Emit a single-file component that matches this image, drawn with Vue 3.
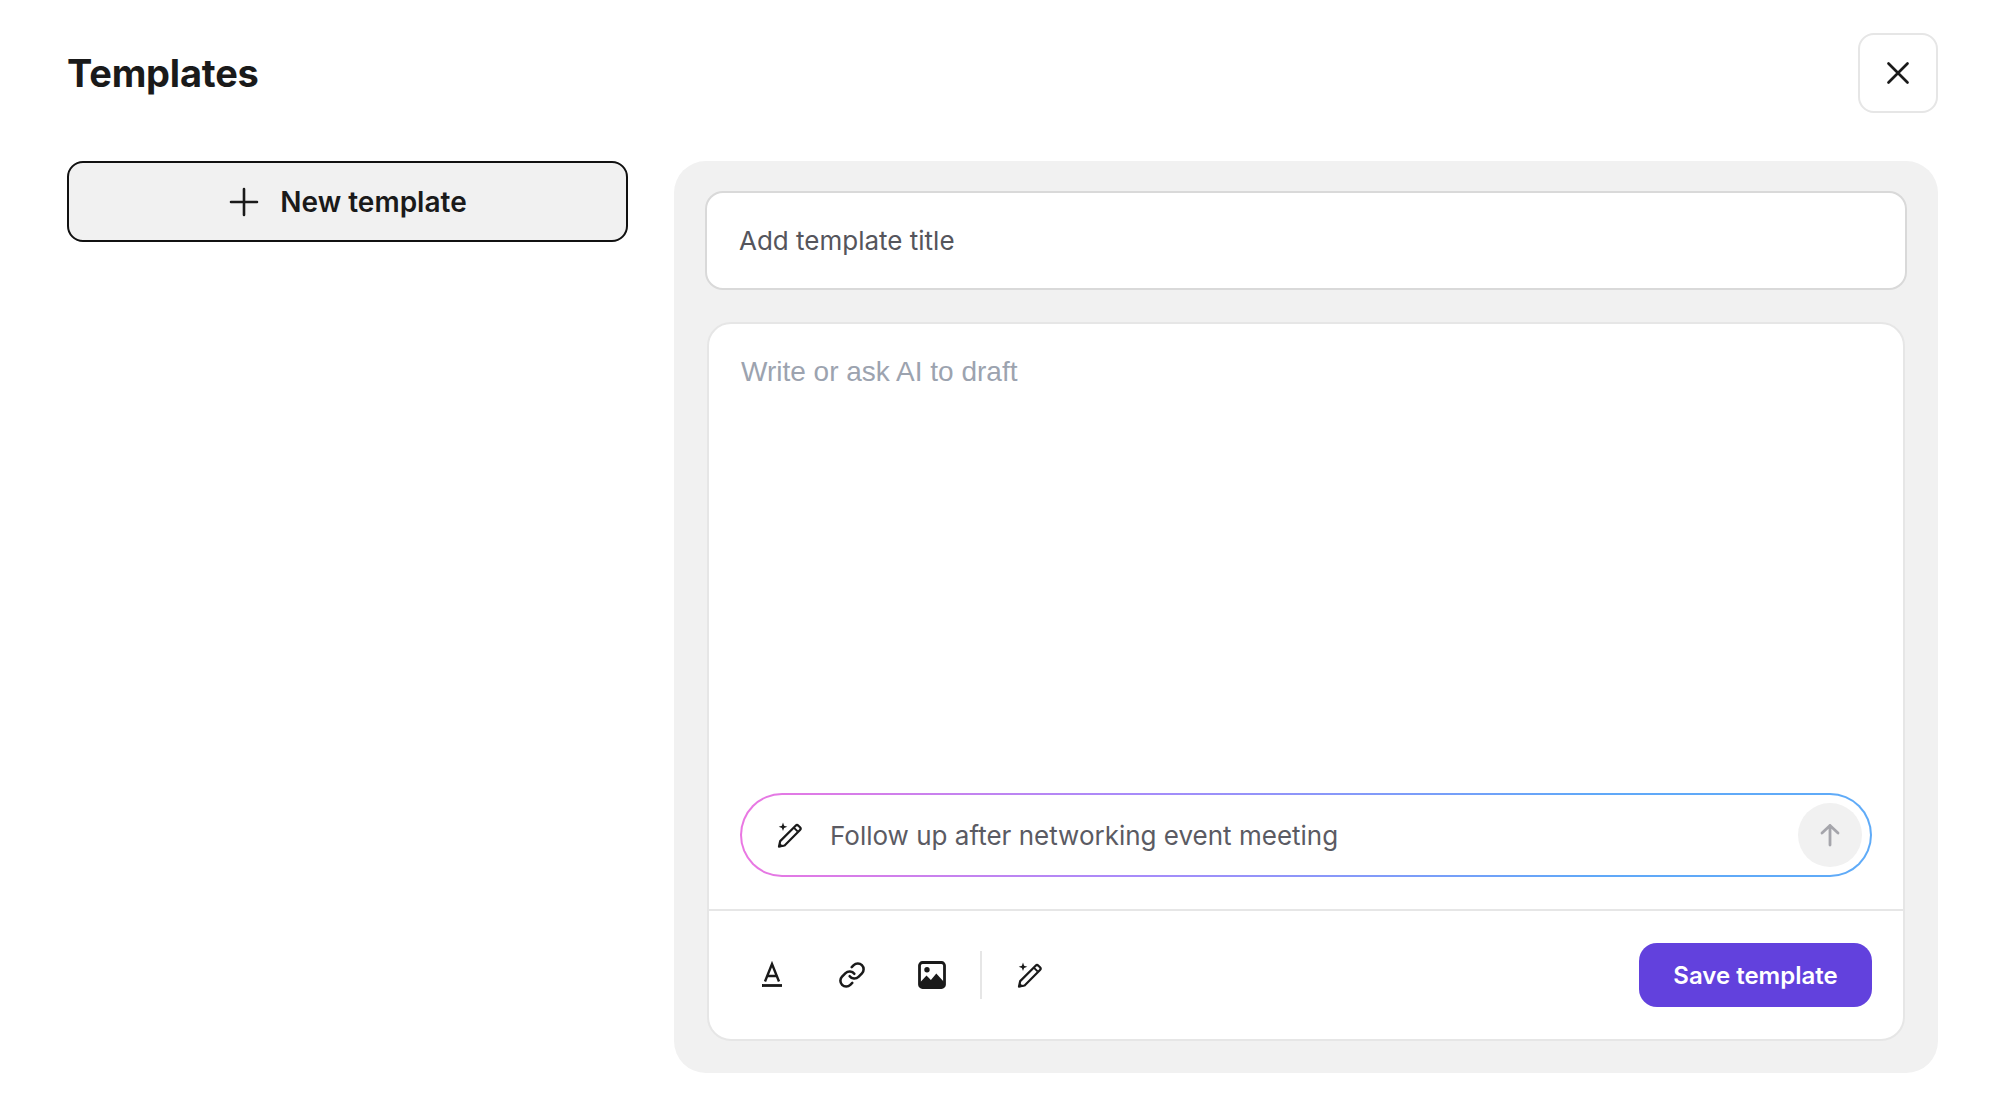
<script setup>
const wandBody = 'M3 25.5l1.2-5.4L19.6 4.7a2 2 0 0 1 2.8 0l1.6 1.6a2 2 0 0 1 0 2.8L8.6 24.5 3 25.5z'
const wandStar = 'M7 1.5l1.1 3.2 3.2 1.1-3.2 1.1L7 10.1 5.9 6.9 2.7 5.8l3.2-1.1L7 1.5z'
</script>

<template>
  <div class="page">
    <header class="top">
      <h1>Templates</h1>
      <button class="close">
        <svg width="28" height="28" viewBox="0 0 28 28" fill="none" stroke="#1a1a1a" stroke-width="2.7" stroke-linecap="round">
          <path d="M4.5 4.5l19 19M23.5 4.5l-19 19" />
        </svg>
      </button>
    </header>

    <div class="columns">
      <aside>
        <button class="new-btn">
          <svg width="32" height="32" viewBox="0 0 32 32" fill="none" stroke="#1a1a1a" stroke-width="2.6" stroke-linecap="round">
            <path d="M16 3v26M3 16h26" />
          </svg>
          <span>New template</span>
        </button>
      </aside>

      <section class="panel">
        <div class="title-input">Add template title</div>

        <div class="card">
          <div class="body">
            <div class="placeholder">Write or ask AI to draft</div>
            <div class="pill">
              <svg class="icon" width="28" height="28" viewBox="0 0 28 28">
                <path :d="wandBody" fill="none" stroke="#1a1a1a" stroke-width="2.2" stroke-linejoin="round" />
                <path d="M2.5 26.5l.9-5 4.4 4.2-5.3.8z" fill="#1a1a1a" />
                <path d="M17.8 6.6l3.8 3.8" stroke="#1a1a1a" stroke-width="2" />
                <path :d="wandStar" fill="#1a1a1a" />
              </svg>
              <span class="prompt">Follow up after networking event meeting</span>
              <button class="send">
                <svg width="24" height="24" viewBox="0 0 24 24" fill="none" stroke="#a5a5ab" stroke-width="2.8" stroke-linecap="round" stroke-linejoin="round">
                  <path d="M12 22V2.5M4 10l8-7.5 8 7.5" />
                </svg>
              </button>
            </div>
          </div>

          <footer class="toolbar">
            <button class="tool">
              <svg width="28" height="28" viewBox="0 0 28 28" fill="none" stroke="#1a1a1a" stroke-width="2.4">
                <path d="M7 20.5L14 3l7 17.5M9.2 15h9.6" />
                <path d="M4 24.5h20" stroke-width="2.8" />
              </svg>
            </button>
            <button class="tool">
              <svg width="28" height="28" viewBox="0 0 24 24" fill="none" stroke="#1a1a1a" stroke-width="2.2" stroke-linecap="round" stroke-linejoin="round">
                <path d="M10 13a5 5 0 0 0 7.54.54l3-3a5 5 0 0 0-7.07-7.07l-1.72 1.71" />
                <path d="M14 11a5 5 0 0 0-7.54-.54l-3 3a5 5 0 0 0 7.07 7.07l1.71-1.71" />
              </svg>
            </button>
            <button class="tool">
              <svg width="28" height="28" viewBox="0 0 28 28">
                <rect x="1.5" y="1.5" width="25" height="25" rx="3" fill="none" stroke="#1a1a1a" stroke-width="2.8" />
                <circle cx="9" cy="8.8" r="2.7" fill="#1a1a1a" />
                <path d="M2 26v-4.5l6.5-7 4.4 4.4 5.4-6.4 7.7 8.6V26z" fill="#1a1a1a" />
              </svg>
            </button>
            <div class="sep"></div>
            <button class="tool">
              <svg width="28" height="28" viewBox="0 0 28 28">
                <path :d="wandBody" fill="none" stroke="#1a1a1a" stroke-width="2.2" stroke-linejoin="round" />
                <path d="M2.5 26.5l.9-5 4.4 4.2-5.3.8z" fill="#1a1a1a" />
                <path d="M17.8 6.6l3.8 3.8" stroke="#1a1a1a" stroke-width="2" />
                <path :d="wandStar" fill="#1a1a1a" />
              </svg>
            </button>
            <button class="save">Save template</button>
          </footer>
        </div>
      </section>
    </div>
  </div>
</template>

<style>
html, body {
  margin: 0;
  background: #fff;
}
</style>

<style scoped>
.page {
  box-sizing: border-box;
  width: 1996px;
  height: 1102px;
  padding: 33px 58px 0 67px;
  font-family: Inter, 'Noto Sans', sans-serif;
  color: #1a1a1a;
  overflow: hidden;
}

button {
  font-family: inherit;
  cursor: pointer;
}

.top {
  display: flex;
  justify-content: space-between;
  align-items: center;
  height: 80px;
  margin-bottom: 48px;
}

h1 {
  margin: 0;
  font-size: 38px;
  font-weight: 700;
  letter-spacing: -0.2px;
}

.close {
  display: flex;
  align-items: center;
  justify-content: center;
  box-sizing: border-box;
  width: 80px;
  height: 80px;
  padding: 0;
  background: #fff;
  border: 2px solid #e6e6e6;
  border-radius: 16px;
}

.columns {
  display: flex;
  gap: 46px;
}

aside {
  width: 561px;
  flex: none;
}

.new-btn {
  display: flex;
  align-items: center;
  justify-content: center;
  gap: 20px;
  box-sizing: border-box;
  width: 100%;
  height: 81px;
  padding: 0;
  background: #f1f1f1;
  border: 2px solid #111;
  border-radius: 16px;
  color: #1a1a1a;
  font-size: 28px;
  font-weight: 600;
}

.panel {
  box-sizing: border-box;
  width: 1264px;
  height: 912px;
  padding: 30px 31px 32px;
  background: #f1f1f1;
  border-radius: 32px;
  display: flex;
  flex-direction: column;
  gap: 32px;
}

.title-input {
  box-sizing: border-box;
  height: 99px;
  padding-left: 32px;
  display: flex;
  align-items: center;
  background: #fff;
  border: 2px solid #d9d9d9;
  border-radius: 18px;
  font-size: 26px;
  color: #55555c;
}

.card {
  flex: 1;
  margin: 0 2px;
  display: flex;
  flex-direction: column;
  background: #fff;
  border: 2px solid #e6e6e6;
  border-radius: 24px;
}

.body {
  flex: 1;
  display: flex;
  flex-direction: column;
  justify-content: space-between;
  padding: 32px 31px 32px;
}

.placeholder {
  padding-left: 1px;
  font-family: 'Liberation Sans', Arial, sans-serif;
  font-size: 28px;
  line-height: 32px;
  color: #9ca3af;
}

.pill {
  box-sizing: border-box;
  height: 84px;
  display: flex;
  align-items: center;
  padding: 0 8px 0 34px;
  border: 2px solid transparent;
  border-radius: 42px;
  background:
    linear-gradient(#fff, #fff) padding-box,
    linear-gradient(90deg, #ea77e2 0%, #a78bfa 35%, #60a8f8 75%, #5fabf8 100%) border-box;
}

.icon {
  flex: none;
}

.prompt {
  flex: 1;
  margin-left: 26px;
  font-size: 26px;
  color: #5b5b63;
}

.send {
  display: flex;
  align-items: center;
  justify-content: center;
  width: 64px;
  height: 64px;
  padding: 0;
  border: none;
  border-radius: 50%;
  background: #f1f1f1;
}

.toolbar {
  display: flex;
  align-items: center;
  gap: 16px;
  padding: 32px 31px;
  border-top: 2px solid #e6e6e6;
}

.tool {
  display: flex;
  align-items: center;
  justify-content: center;
  width: 64px;
  height: 64px;
  padding: 0;
  border: none;
  background: none;
}

.sep {
  width: 2px;
  height: 48px;
  background: #e6e6e6;
}

.save {
  margin-left: auto;
  width: 233px;
  height: 64px;
  padding: 0;
  border: none;
  border-radius: 18px;
  background: #6241dd;
  color: #fff;
  font-size: 24px;
  font-weight: 600;
}
</style>
